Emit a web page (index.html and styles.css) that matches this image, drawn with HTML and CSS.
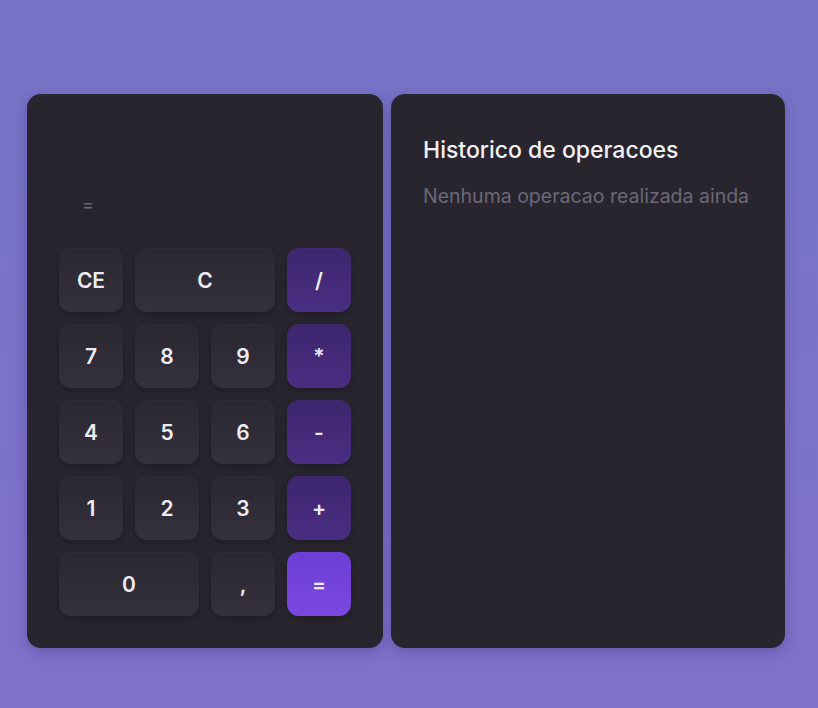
FILE: index.html
```html
<!DOCTYPE html>
<html lang="pt">
<head>
<meta charset="utf-8">
<title>Calculadora</title>
<link rel="stylesheet" href="styles.css">
</head>
<body>
<main class="app">
  <section class="calc">
    <div class="display">
      <div class="expr">=</div>
      <div class="value"></div>
    </div>
    <div class="keys">
      <button class="key">CE</button>
      <button class="key span2">C</button>
      <button class="key op">/</button>
      <button class="key">7</button>
      <button class="key">8</button>
      <button class="key">9</button>
      <button class="key op">*</button>
      <button class="key">4</button>
      <button class="key">5</button>
      <button class="key">6</button>
      <button class="key op">-</button>
      <button class="key">1</button>
      <button class="key">2</button>
      <button class="key">3</button>
      <button class="key op">+</button>
      <button class="key span2">0</button>
      <button class="key">,</button>
      <button class="key eq">=</button>
    </div>
  </section>
  <section class="history">
    <h2 class="history-title">Historico de operacoes</h2>
    <p class="history-empty">Nenhuma operacao realizada ainda</p>
  </section>
</main>
</body>
</html>
```
FILE: styles.css
```css
* { box-sizing: border-box; }
html, body { height: 100%; }
body {
  margin: 0;
  background: linear-gradient(180deg, #7574c7 0%, #8070cb 100%);
  font-family: Inter, "Noto Sans", sans-serif;
  color: #ecebf1;
}
.app {
  display: flex;
  gap: 8px;
  padding: 94px 0 0 27px;
}
.calc, .history {
  background: #28252f;
  border-radius: 14px;
  height: 554px;
  box-shadow: 0 4px 14px rgba(30, 20, 70, 0.25);
}
.calc {
  width: 356px;
  padding: 32px;
  display: flex;
  flex-direction: column;
}
.display {
  height: 110px;
  margin-bottom: 12px;
  display: flex;
  flex-direction: column;
  justify-content: flex-end;
  padding: 0 23px 21px;
}
.expr {
  font-size: 18px;
  line-height: 20px;
  color: #6d6a77;
}
.keys {
  display: grid;
  grid-template-columns: repeat(4, 64px);
  grid-auto-rows: 64px;
  gap: 12px;
}
.key {
  border: none;
  border-radius: 12px;
  background: linear-gradient(180deg, #2a2731 0%, #34313c 100%);
  box-shadow: 0 3px 6px rgba(0, 0, 0, 0.25), inset 0 1px 0 rgba(255,255,255,0.03);
  color: #ecebf1;
  font-family: inherit;
  font-size: 21px;
  font-weight: 600;
  padding: 0;
}
.span2 { grid-column: span 2; }
.op { background: linear-gradient(180deg, #3d256e 0%, #4a2e82 100%); }
.eq { background: linear-gradient(180deg, #6c3ed6 0%, #7a48e0 100%); }
.history {
  width: 394px;
  padding: 40px 32px;
}
.history-title {
  margin: 0;
  font-size: 23px;
  font-weight: 500;
  line-height: 32px;
  color: #f1f0f5;
}
.history-empty {
  margin: 16px 0 0;
  font-size: 19.5px;
  line-height: 28px;
  color: #6b6877;
}
```
